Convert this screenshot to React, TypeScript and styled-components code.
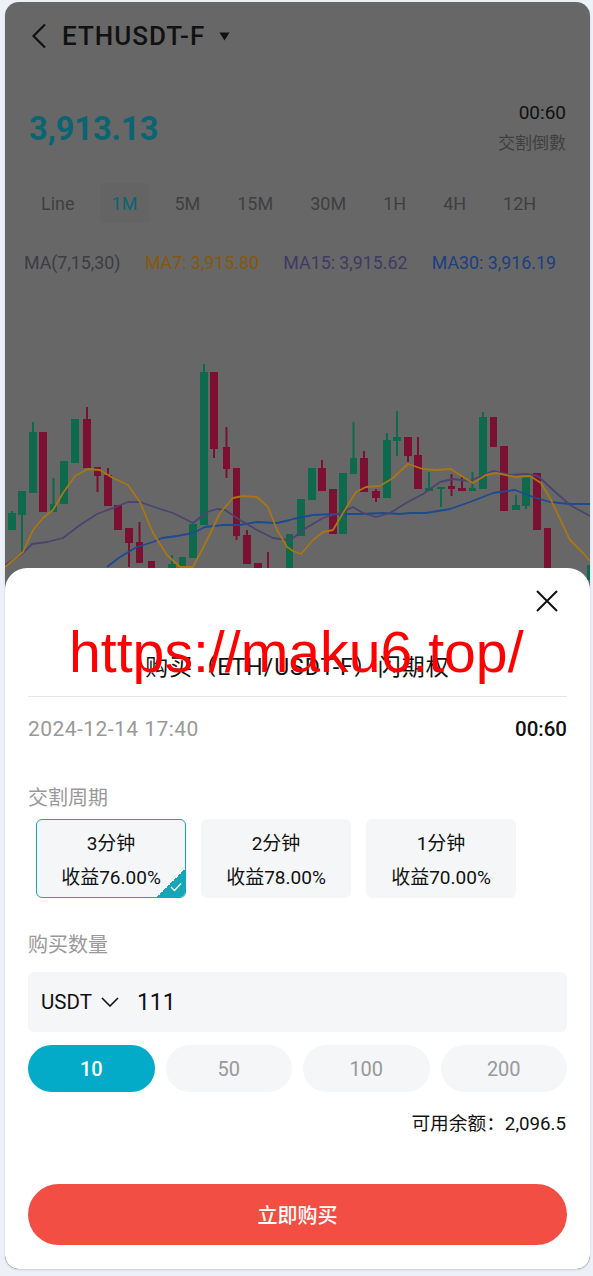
import React from 'react';
import styled, { createGlobalStyle } from 'styled-components';

const GlobalStyle = createGlobalStyle`
	html, body {
		margin: 0;
		padding: 0;
		background: #eef0f8;
	}
	* {
		box-sizing: border-box;
	}
`;

const FONT = `Roboto, "Noto Sans CJK SC", sans-serif`;

// [x, width, bodyTop, bodyBottom, wickTop, wickBottom, isUp]
type Candle = [number, number, number, number, number, number, boolean];

const candles: Candle[] = [
	[8, 8, 513, 530, 511, 530, true],
	[18, 8, 491, 515, 491, 552, true],
	[29, 8, 432, 493, 422, 493, true],
	[39, 8, 432, 512, 432, 512, false],
	[50, 7, 504, 512, 478, 512, true],
	[60, 8, 461, 504, 461, 504, true],
	[71, 8, 419, 463, 419, 463, true],
	[83, 8, 419, 468, 407, 468, false],
	[94, 7, 467, 476, 467, 492, false],
	[104, 8, 475, 506, 468, 506, false],
	[114, 8, 505, 530, 505, 530, false],
	[125, 8, 528, 543, 528, 567, false],
	[136, 7, 542, 563, 522, 563, false],
	[148, 7, 561, 580, 561, 580, false],
	[168, 8, 564, 580, 555, 580, true],
	[179, 7, 557, 580, 557, 580, true],
	[189, 8, 524, 558, 524, 558, true],
	[200, 8, 372, 525, 364, 525, true],
	[210, 8, 372, 449, 372, 458, false],
	[223, 7, 447, 469, 427, 478, false],
	[233, 7, 468, 536, 468, 540, false],
	[243, 8, 535, 564, 530, 564, false],
	[254, 8, 563, 580, 563, 580, false],
	[266, 4, 570, 580, 552, 580, false],
	[286, 7, 534, 580, 534, 580, true],
	[297, 8, 499, 536, 499, 536, true],
	[308, 8, 468, 500, 468, 500, true],
	[318, 8, 468, 491, 460, 491, false],
	[329, 8, 489, 534, 489, 534, false],
	[339, 8, 473, 534, 473, 534, true],
	[350, 7, 458, 474, 422, 474, true],
	[360, 8, 458, 492, 451, 492, false],
	[372, 8, 491, 498, 489, 502, false],
	[383, 8, 440, 498, 433, 498, true],
	[393, 8, 437, 441, 411, 456, true],
	[404, 8, 437, 456, 437, 462, false],
	[414, 8, 455, 489, 437, 489, false],
	[425, 8, 488, 491, 472, 491, true],
	[437, 8, 487, 489, 487, 507, true],
	[448, 7, 486, 489, 474, 496, false],
	[458, 8, 488, 491, 477, 491, false],
	[469, 7, 488, 491, 472, 491, true],
	[479, 8, 417, 489, 412, 489, true],
	[490, 7, 417, 447, 417, 447, false],
	[500, 8, 446, 511, 446, 511, false],
	[512, 8, 505, 510, 495, 510, true],
	[522, 8, 476, 506, 476, 509, true],
	[533, 8, 473, 530, 473, 530, false],
	[544, 7, 528, 580, 528, 580, false],
	[587, 6, 565, 580, 565, 580, true]
];

const ma7 =
	'5,567 23,552 33,530 43,518 53,510 63,493 75,476 88,469 100,470 113,478 128,485 140,502 153,533 167,555 180,567 193,567 207,540 220,513 233,498 243,496 257,497 268,507 277,530 287,547 293,551 301,554 313,540 323,532 333,530 343,513 356,492 366,487 380,486 393,478 408,464 423,469 436,470 451,469 463,477 473,483 486,475 496,473 516,477 530,476 541,483 551,500 570,540 583,553 590,561';
const ma15 =
	'5,565 22,554 32,544 47,542 63,538 80,525 97,514 113,508 128,502 140,502 157,508 173,513 193,523 207,512 217,509 225,510 240,520 257,530 273,538 287,540 293,538 306,528 323,518 340,513 353,507 363,513 376,517 390,513 406,503 423,494 440,482 453,479 470,481 483,475 493,471 510,475 526,474 538,476 553,490 570,505 590,516';
const ma30 =
	'107,567 120,557 137,547 153,542 162,538 177,536 193,533 205,527 223,525 240,525 257,522 277,523 290,520 293,519 313,515 333,514 360,514 383,513 400,514 410,513 426,513 450,509 470,502 493,493 515,490 533,497 550,502 570,504 590,504';

const App = () => {
	const options = [
		{ time: '3分钟', rate: '收益76.00%', selected: true },
		{ time: '2分钟', rate: '收益78.00%', selected: false },
		{ time: '1分钟', rate: '收益70.00%', selected: false }
	];

	return (
		<>
			<GlobalStyle />
			<Page>
				<Phone>
					<Header>
						<svg width="16" height="26" viewBox="0 0 16 26">
							<path d="M14 1.5 L2.5 13 L14 24.5" fill="none" stroke="#111" strokeWidth="2.2" />
						</svg>
						<Symbol>ETHUSDT-F</Symbol>
						<svg width="11" height="9" viewBox="0 0 11 9">
							<path d="M0.5 0.5 H10.5 L5.5 8.5 Z" fill="#111" />
						</svg>
					</Header>
					<PriceRow>
						<Price>3,913.13</Price>
						<Countdown>
							<Time>00:60</Time>
							<TimeLabel>交割倒數</TimeLabel>
						</Countdown>
					</PriceRow>
					<Tabs>
						{['Line', '1M', '5M', '15M', '30M', '1H', '4H', '12H'].map(tab => (
							<Tab key={tab} $active={tab === '1M'}>
								{tab}
							</Tab>
						))}
					</Tabs>
					<MaRow>
						<MaItem $color="#3c3c44">MA(7,15,30)</MaItem>
						<MaItem $color="#85580a">MA7: 3,915.80</MaItem>
						<MaItem $color="#3f3a64">MA15: 3,915.62</MaItem>
						<MaItem $color="#1b4080">MA30: 3,916.19</MaItem>
					</MaRow>
					<Chart viewBox="5 280 585 300">
						{candles.map(([x, w, top, bottom, wickTop, wickBottom, up]) => (
							<g key={`${x}-${top}`} fill={up ? '#0d6a4d' : '#7b1033'}>
								<rect x={x + w / 2 - 1} y={wickTop} width="2" height={wickBottom - wickTop} />
								<rect x={x} y={top} width={w} height={bottom - top} />
							</g>
						))}
						<MaLine points={ma30} stroke="#1d4a93" />
						<MaLine points={ma15} stroke="#4a4470" />
						<MaLine points={ma7} stroke="#a87614" />
					</Chart>

					<Sheet>
						<CloseButton>
							<svg width="22" height="22" viewBox="0 0 22 22">
								<path d="M1 1 L21 21 M21 1 L1 21" fill="none" stroke="#111" strokeWidth="2" />
							</svg>
						</CloseButton>
						<SheetTitle>购买（ETH/USDT-F）闪期权</SheetTitle>
						<DateRow>
							<DateText>2024-12-14 17:40</DateText>
							<DateTime>00:60</DateTime>
						</DateRow>
						<SectionLabel>交割周期</SectionLabel>
						<OptionRow>
							{options.map(o => (
								<OptionCard key={o.time} $selected={o.selected}>
									<span>{o.time}</span>
									<span>{o.rate}</span>
									{o.selected && (
										<Corner>
											<svg width="12" height="10" viewBox="0 0 12 10">
												<path d="M1 5 L4.5 8.5 L11 1.5" fill="none" stroke="#fff" strokeWidth="1.3" />
											</svg>
										</Corner>
									)}
								</OptionCard>
							))}
						</OptionRow>
						<QuantityLabel>购买数量</QuantityLabel>
						<InputBox>
							<Currency>USDT</Currency>
							<svg width="18" height="10" viewBox="0 0 18 10">
								<path d="M1 1 L9 9 L17 1" fill="none" stroke="#111" strokeWidth="1.6" />
							</svg>
							<Amount>111</Amount>
						</InputBox>
						<PillRow>
							{['10', '50', '100', '200'].map(v => (
								<Pill key={v} $active={v === '10'}>
									{v}
								</Pill>
							))}
						</PillRow>
						<Balance>可用余额：2,096.5</Balance>
						<BuyButton>立即购买</BuyButton>
					</Sheet>
					<Watermark>https://maku6.top/</Watermark>
				</Phone>
			</Page>
		</>
	);
};

const Page = styled.div`
	width: 593px;
	height: 1276px;
	padding: 2px 3px 7px 5px;
	background: #eef0f8;
	font-family: ${FONT};
	overflow: hidden;
`;

const Phone = styled.div`
	position: relative;
	height: 100%;
	background: #676767;
	border-radius: 14px;
	overflow: hidden;
	box-shadow: 0 1px 2px rgba(0, 0, 0, 0.15);
`;

const Header = styled.div`
	display: flex;
	align-items: center;
	height: 68px;
	padding-left: 26px;
`;

const Symbol = styled.div`
	margin: 0 14px 0 15px;
	font-size: 26px;
	letter-spacing: 1px;
	font-weight: 500;
	color: #111;
`;

const PriceRow = styled.div`
	display: flex;
	justify-content: space-between;
	align-items: center;
	height: 80px;
	padding: 0 24px;
	margin-top: 19px;
`;

const Price = styled.div`
	font-size: 32.5px;
	font-weight: 700;
	color: #0a6472;
`;

const Countdown = styled.div`
	display: flex;
	flex-direction: column;
	align-items: flex-end;
	gap: 5px;
	margin-bottom: 3px;
`;

const Time = styled.div`
	font-size: 19px;
	color: #111;
`;

const TimeLabel = styled.div`
	font-size: 17px;
	color: #3f3f3f;
`;

const Tabs = styled.div`
	display: flex;
	gap: 13px;
	height: 40px;
	margin: 14px 0 0 24px;
`;

const Tab = styled.div<{ $active?: boolean }>`
	display: flex;
	align-items: center;
	justify-content: center;
	padding: 0 12px;
	font-size: 18px;
	border-radius: 4px;
	color: ${p => (p.$active ? '#0a6472' : '#3f3f3f')};
	background: ${p => (p.$active ? '#646464' : 'transparent')};
`;

const MaRow = styled.div`
	display: flex;
	justify-content: space-between;
	align-items: center;
	height: 24px;
	margin-top: 27px;
	padding: 0 34px 0 19px;
`;

const MaItem = styled.span<{ $color: string }>`
	font-size: 17.8px;
	color: ${p => p.$color};
`;

const Chart = styled.svg`
	display: block;
	width: 585px;
	height: 300px;
	margin-top: 6px;
`;

const MaLine = styled.polyline.attrs({ fill: 'none', strokeWidth: 1.8, strokeLinejoin: 'round' })``;

const Sheet = styled.div`
	position: absolute;
	left: 0;
	right: 0;
	bottom: 0;
	height: 701px;
	padding: 0 23px;
	background: #fff;
	border-radius: 22px 22px 14px 14px;
	color: #111;
`;

const CloseButton = styled.div`
	display: flex;
	justify-content: flex-end;
	padding: 22px 9px 0 0;
	height: 55px;
`;

const SheetTitle = styled.div`
	height: 74px;
	padding-top: 30px;
	line-height: 30px;
	font-size: 23px;
	letter-spacing: 1px;
	text-align: center;
	border-bottom: 1px solid #e6e6e6;
`;

const DateRow = styled.div`
	display: flex;
	justify-content: space-between;
	align-items: center;
	height: 65px;
	padding-bottom: 2px;
	font-size: 20.5px;
`;

const DateText = styled.span`
	color: #999;
	font-size: 21px;
	letter-spacing: 0.45px;
`;

const DateTime = styled.span`
	font-weight: 500;
`;

const SectionLabel = styled.div`
	margin-top: 2px;
	height: 50px;
	line-height: 28px;
	padding-top: 20px;
	font-size: 20px;
	color: #999;
`;

const OptionRow = styled.div`
	display: flex;
	gap: 15px;
	margin: 5px 0 0 8px;
`;

const OptionCard = styled.div<{ $selected?: boolean }>`
	position: relative;
	display: flex;
	flex-direction: column;
	align-items: center;
	justify-content: space-between;
	width: 150px;
	height: 79px;
	padding: 12px 0 7px;
	font-size: 19px;
	line-height: 24px;
	background: #f4f6f8;
	border-radius: 6px;
	overflow: hidden;
	border: 1px solid ${p => (p.$selected ? '#17a5b8' : '#f4f6f8')};
`;

const Corner = styled.div`
	position: absolute;
	right: 0;
	bottom: 0;
	width: 28px;
	height: 28px;
	display: flex;
	align-items: flex-end;
	justify-content: flex-end;
	padding: 0 3px 5px 0;
	background: linear-gradient(135deg, transparent 50%, #17a5b8 50%);
`;

const QuantityLabel = styled(SectionLabel)`
	margin-top: 0;
	height: 74px;
	padding-top: 33px;
	line-height: 28px;
`;

const InputBox = styled.div`
	display: flex;
	align-items: center;
	height: 60px;
	padding-left: 13px;
	background: #f4f6f8;
	border-radius: 6px;
`;

const Currency = styled.span`
	margin-right: 9px;
	font-size: 20.5px;
`;

const Amount = styled.span`
	margin-left: 18px;
	font-size: 23px;
`;

const PillRow = styled.div`
	display: grid;
	grid-template-columns: repeat(4, 1fr);
	gap: 11px;
	margin-top: 13px;
`;

const Pill = styled.div<{ $active?: boolean }>`
	display: flex;
	align-items: center;
	justify-content: center;
	height: 47px;
	border-radius: 24px;
	font-size: 20px;
	color: ${p => (p.$active ? '#fff' : '#999')};
	background: ${p => (p.$active ? '#03abc9' : '#f4f6f8')};
	font-weight: ${p => (p.$active ? 500 : 400)};
`;

const Balance = styled.div`
	margin-top: 20px;
	padding-right: 1px;
	line-height: 24px;
	font-size: 18.7px;
	text-align: right;
`;

const BuyButton = styled.div`
	display: flex;
	align-items: center;
	justify-content: center;
	height: 61px;
	margin-top: 48px;
	border-radius: 31px;
	background: #f34e43;
	color: #fff;
	font-size: 20px;
	font-weight: 500;
`;

const Watermark = styled.div`
	position: absolute;
	left: 64px;
	top: 610px;
	font-family: 'Liberation Sans', sans-serif;
	font-size: 57.2px;
	line-height: 80px;
	color: #f00;
	white-space: nowrap;
`;

export default App;
